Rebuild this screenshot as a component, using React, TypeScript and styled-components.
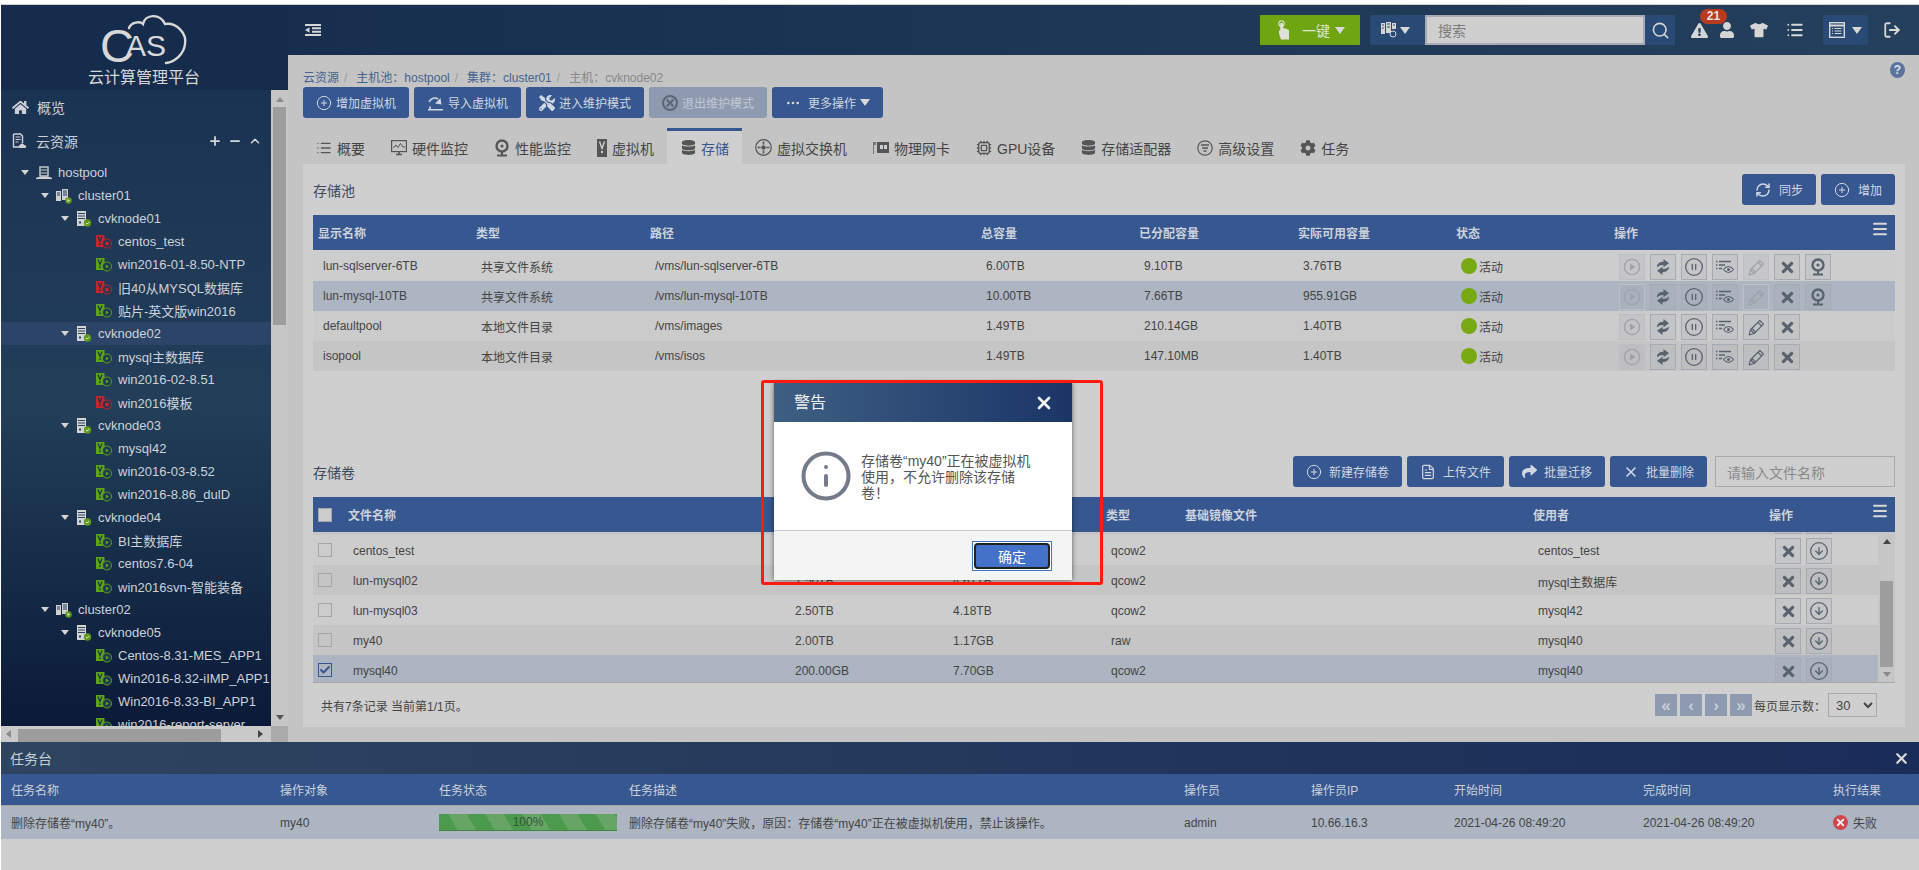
import React from 'react';
import styled, { createGlobalStyle } from 'styled-components';
import { CirclePlus, CirclePause, CircleArrowDown, RefreshCw, X as XIcon, FileText, Ellipsis, List, Cpu, Menu, Search, LogOut, Info, Check, ChevronUp, Plus, Minus } from 'lucide-react';
import { FaHome, FaTimes, FaTools, FaTshirt, FaUser, FaDatabase, FaCog, FaShare, FaExclamationTriangle } from 'react-icons/fa';

const Font = `"Liberation Sans", "Noto Sans CJK SC", sans-serif`;

const Global = createGlobalStyle`
  html, body { margin: 0; padding: 0; background: #fff; overflow: hidden; }
  body { font-family: ${Font}; font-size: 12px; color: #444; }
  * { box-sizing: border-box; }
`;

const Page = styled.div`
  width: 1919px; height: 870px; padding-left: 1px; display: flex; flex-direction: column; position: relative; overflow: hidden;
`;
const TopStrip = styled.div`height: 5px; border-bottom: 1px solid #d0d0d0; background: #fff; flex: none;`;
const Middle = styled.div`display: flex; height: 737px; flex: none;`;

/* ---------- sidebar ---------- */
const Sidebar = styled.aside`width: 287px; flex: none; display: flex; flex-direction: column; background: #c8c8c8;`;
const LogoArea = styled.div`
  height: 85px; flex: none; background: #162c4c; display: flex; flex-direction: column; align-items: center; color: #d6d6d6;
  padding-top: 9px; padding-right: 1px;
`;
const LogoSvg = styled.svg`overflow: visible; flex: none;`;
const LogoTitle = styled.div`font-size: 16px; line-height: 18px; margin-top: 5px; color: #d8d8d8;`;
const TreeWrap = styled.div`flex: 1; display: flex; min-height: 0;`;
const TreePane = styled.div`
  width: 270px; flex: none; overflow: hidden;
  background: linear-gradient(180deg, #1b3353 0%, #223e59 50%, #0a1a38 100%);
`;
const MenuRow = styled.div`
  height: 34px; display: flex; align-items: center; padding-left: 11px; gap: 8px; color: #ccd0d6; font-size: 14px;
`;
const MenuTools = styled.div`margin-left: auto; display: flex; gap: 6px; padding-right: 9px; color: #d8d8d8;`;
const TreeList = styled.div`padding-top: 3px; white-space: nowrap;`;
const TreeRowEl = styled.div<{ $level: number; $sel?: boolean }>`
  height: 23px; display: flex; align-items: center; font-size: 13px; color: #ced2d8;
  padding-left: ${p => 20 + p.$level * 20}px;
  background: ${p => (p.$sel ? '#2b4468' : 'transparent')};
`;
const TreeCaret = styled.span<{ $hidden?: boolean }>`
  width: 0; height: 0; flex: none; margin-right: 7px;
  border-left: 4px solid transparent; border-right: 4px solid transparent;
  border-top: 5px solid ${p => (p.$hidden ? 'transparent' : '#d4d4d4')};
`;
const TreeLabel = styled.span`margin-left: 6px;`;

const VTrack = styled.div<{ $w: number }>`
  width: ${p => p.$w}px; flex: none; background: #c6c6c6; display: flex; flex-direction: column; align-items: center;
`;
const VArrow = styled.div<{ $dir: 'up' | 'down'; $c: string; $mt?: number; $mb?: number }>`
  width: 0; height: 0; flex: none; margin: ${p => p.$mt ?? 0}px 0 ${p => p.$mb ?? 0}px;
  border-left: 4px solid transparent; border-right: 4px solid transparent;
  ${p => (p.$dir === 'up' ? `border-bottom: 5px solid ${p.$c};` : `border-top: 5px solid ${p.$c};`)}
`;
const VThumb = styled.div<{ $top: number; $h: number }>`
  width: 13px; height: ${p => p.$h}px; background: #9d9d9d; margin-top: ${p => p.$top}px; flex: none;
`;
const VSpacer = styled.div`flex: 1;`;
const HTrack = styled.div`height: 16px; flex: none; display: flex; align-items: center; background: #c9c9c9;`;
const HArrow = styled.div<{ $dir: 'left' | 'right' }>`
  width: 0; height: 0; flex: none;
  border-top: 4px solid transparent; border-bottom: 4px solid transparent;
  ${p => (p.$dir === 'left' ? 'border-right: 5px solid #8a8a8a; margin: 0 7px 0 5px;' : 'border-left: 5px solid #444; margin: 0 6px 0 37px;')}
`;
const HThumb = styled.div`width: 203px; height: 13px; background: #9d9d9d; margin-top: 2px;`;
const HCorner = styled.div`margin-left: auto; width: 17px; height: 16px; background: #aaa;`;

/* ---------- header ---------- */
const MainCol = styled.div`flex: 1; min-width: 0; display: flex; flex-direction: column; background: #c4c4c4;`;
const TopBar = styled.header`
  height: 50px; flex: none; display: flex; align-items: center; color: #d6d6d6;
  background: linear-gradient(90deg, #172e4e 0%, #24405c 100%); padding: 0 18px 0 17px;
`;
const TopSpacer = styled.div`flex: 1;`;
const GreenButton = styled.div`
  width: 100px; height: 30px; background: #6ea511; display: flex; align-items: center; color: #dfe6d2; font-size: 14px; padding-left: 17px;
`;
const GreenLabel = styled.span`margin-left: 12px;`;
const Caret = styled.span<{ $c?: string; $ml?: number }>`
  display: inline-block; width: 0; height: 0; flex: none; margin-left: ${p => p.$ml ?? 5}px;
  border-left: 5.5px solid transparent; border-right: 5.5px solid transparent;
  border-top: 7px solid ${p => p.$c ?? '#d8d8d8'};
`;
const SearchGroup = styled.div`display: flex; margin-left: 10px; height: 30px;`;
const SearchKind = styled.div`width: 55px; background: #2a4a76; display: flex; align-items: center; padding-left: 11px;`;
const SearchInput = styled.div`
  width: 220px; border: 2px solid #a8aab4; background: #cfcfcf; color: #7c7c7c; font-size: 14px; padding-left: 11px; display: flex; align-items: center;
`;
const SearchBtn = styled.div`width: 30px; background: #2a4a76; display: flex; align-items: center; justify-content: center;`;
const IconSlot = styled.div<{ $ml: number }>`
  width: 18px; height: 20px; margin-left: ${p => p.$ml}px; display: flex; align-items: center; justify-content: center; position: relative; flex: none;
`;
const Badge = styled.span`
  position: absolute; left: 10px; top: -11px; width: 27px; height: 15px; border-radius: 8px; background: #b93a1f; color: #e4e4e4;
  font-size: 12px; font-weight: bold; line-height: 15px; text-align: center;
`;
const ViewBtn = styled.div`
  width: 45px; height: 30px; margin-left: 19px; border-radius: 3px; background: #2a4a76; display: flex; align-items: center; padding-left: 6px; flex: none;
`;

/* ---------- content ---------- */
const Content = styled.main`flex: 1; min-height: 0; display: flex; flex-direction: column; padding: 0 14px 15px 15px;`;
const CrumbRow = styled.div`height: 32px; flex: none; display: flex; align-items: center; justify-content: space-between; padding-top: 11px;`;
const Crumbs = styled.div`color: #46638f; font-size: 12px;`;
const CrumbSep = styled.span`color: #999; margin: 0 9px 0 5px;`;
const CrumbLast = styled.span`color: #888;`;
const HelpMark = styled.span`
  align-self: flex-start; margin-top: -4px; width: 15px; height: 16px; border-radius: 50%; background: #5a739f; color: #dfe3ea;
  font-size: 12px; font-weight: bold; line-height: 16px; text-align: center;
`;
const ActionBar = styled.div`display: flex; gap: 5px; height: 31px; flex: none;`;
const ActionBtn = styled.div<{ $off?: boolean; $gap?: number; $pl?: number }>`
  height: 31px; border-radius: 3px; display: flex; align-items: center; gap: ${p => p.$gap ?? 4}px; padding: 0 13px 0 ${p => p.$pl ?? 13}px;
  background: ${p => (p.$off ? '#8e9ab0' : '#36578f')}; color: ${p => (p.$off ? '#c2c8d2' : '#d2d8e2')}; font-size: 12px; white-space: nowrap;
`;
const TabBar = styled.div`display: flex; height: 36px; margin-top: 10px; flex: none;`;
const Tab = styled.div<{ $on?: boolean }>`
  display: flex; align-items: center; gap: 5px; padding: ${p => (p.$on ? '0' : '3px')} 13px 0; font-size: 14px;
  color: ${p => (p.$on ? '#36578f' : '#444')};
  ${p => p.$on && 'background: #cfcfcf; border-top: 3px solid #36578f; padding-left: 14px;'}
`;
const Panel = styled.section`flex: 1; min-height: 0; background: #cfcfcf; padding: 10px 10px 0; display: flex; flex-direction: column;`;
const SectionHead = styled.div`display: flex; align-items: center; height: 31px; gap: 5px; flex: none;`;
const SectionTitle = styled.div`font-size: 14px; color: #3d4a5c; margin-right: auto;`;
const FileInput = styled.div`
  width: 180px; height: 31px; margin-left: 3px; border: 1px solid #a9a9a9; color: #8a8a8a; font-size: 14px; padding-left: 11px; display: flex; align-items: center;
`;

const HeadRow = styled.div<{ $cols: string }>`
  display: grid; grid-template-columns: ${p => p.$cols}; height: 35px; background: #36578f; color: #ccd2dc; align-items: center; font-size: 12px; font-weight: bold; position: relative; flex: none;
`;
const HeadCell = styled.div`padding-left: 5px;`;
const HeadMenu = styled.div`position: absolute; right: 6px; top: 5px; color: #d8d8d8; display: flex;`;
const Row = styled.div<{ $cols: string; $tone: 'a' | 'b' | 'c' | 'sel' }>`
  display: grid; grid-template-columns: ${p => p.$cols}; height: 30px; align-items: center; flex: none;
  background: ${p => ({ a: '#cdcdcd', b: '#c5c5c5', c: '#cbcbcb', sel: '#aeb5c2' }[p.$tone])};
`;
const Cell = styled.div`padding-left: 10px; white-space: nowrap; color: #444;`;
const VolCell = styled(Cell)`padding-top: 2px;`;
const StatusDot = styled.span`display: inline-block; width: 16px; height: 16px; border-radius: 50%; background: #75aa11; vertical-align: middle; margin-right: 2px;`;
const StatusText = styled.span`vertical-align: middle;`;
const OpCell = styled.div`padding: 2px 0 0 10px; display: flex; gap: 5px;`;
const OpBtn = styled.div<{ $dim?: boolean }>`
  width: 26px; height: 26px; flex: none; display: flex; align-items: center; justify-content: center;
  background: rgba(130, 140, 155, .10);
  border: 1px solid ${p => (p.$dim ? '#bdbfc2' : '#a6abb3')};
  color: ${p => (p.$dim ? '#9ea3a9' : '#59636f')};
`;
const CheckBox = styled.div<{ $on?: boolean; $head?: boolean }>`
  width: 14px; height: 14px; margin-left: 5px; display: flex; align-items: center; justify-content: center;
  border: 1px solid ${p => (p.$on ? '#36578f' : '#a6a6a6')};
  background: ${p => (p.$head ? '#cdcdcd' : 'transparent')}; color: #36578f;
`;
const Gap85 = styled.div`height: 85px; flex: none;`;
const Gap10 = styled.div`height: 10px; flex: none;`;
const Gap1 = styled.div`height: 1px; flex: none;`;
const VolBody = styled.div`display: flex; height: 151px; flex: none; background: #c5c5c5; border-bottom: 1px solid #a6a6a6;`;
const VolScroll = styled.div`flex: 1; min-width: 0; overflow: hidden;`;
const VolInner = styled.div`margin-top: -27px;`;
const Pager = styled.div`flex: 1; display: flex; align-items: center; padding: 0 18px 0 8px; font-size: 12px; color: #444;`;
const PagerText = styled.div`margin-right: auto;`;
const PageBtn = styled.div`
  width: 22px; height: 22px; margin-right: 3px; background: #8e9ab0; color: #c8ced8; font-size: 17px; font-weight: bold; display: flex; align-items: center; justify-content: center; line-height: 1;
`;
const PageLabel = styled.div`margin: 0 2px 0 -1px;`;
const PageSelect = styled.select`
  width: 49px; height: 24px; background: transparent; border: 1px solid #a9a9a9; font-family: ${Font}; font-size: 13px; color: #444; padding-left: 3px;
`;

/* ---------- task panel ---------- */
const TaskPanel = styled.section`height: 128px; flex: none; display: flex; flex-direction: column; background: #cfcfcf;`;
const TaskTitle = styled.div`
  height: 32px; flex: none; display: flex; align-items: center; justify-content: space-between; padding: 0 9px; color: #c6cdd6; font-size: 14px;
  background: linear-gradient(90deg, #2d4560 0%, #1a2c58 100%);
`;
const TaskHead = styled.div`
  display: grid; grid-template-columns: 269px 159px 190px 555px 127px 143px 189px 190px 1fr; height: 32px; align-items: center; background: #36578f; color: #ccd2dc; font-size: 12px; border-bottom: 1px solid #a6a6a6; flex: none;
`;
const TaskRow = styled.div`
  display: grid; grid-template-columns: 269px 159px 190px 555px 127px 143px 189px 190px 1fr; height: 33px; align-items: center; background: #aeb5c2; color: #444; font-size: 12px; flex: none;
`;
const TaskCell = styled.div`padding-left: 10px; white-space: nowrap; display: flex; align-items: center;`;
const Progress = styled.div`
  width: 178px; height: 17px; text-align: center; line-height: 16px; color: #35533a; font-size: 12px; border-bottom: 1px solid #41863f;
  background: repeating-linear-gradient(60deg, #4c9a4c 0 16px, #67a567 16px 32px);
`;
const FailDot = styled.span`
  width: 15px; height: 15px; border-radius: 50%; background: #d0474b; color: #eee; display: flex; align-items: center; justify-content: center; margin-right: 5px;
`;

/* ---------- dialog ---------- */
const Highlight = styled.div`
  position: absolute; left: 761px; top: 380px; width: 342px; height: 205px; border: 3px solid #ff1a10; border-radius: 3px; pointer-events: none; z-index: 6;
`;
const Dialog = styled.div`
  position: absolute; left: 774px; top: 383px; width: 298px; height: 197px; background: #fff; box-shadow: 0 0 5px rgba(0,0,0,.55); display: flex; flex-direction: column; z-index: 5;
`;
const DialogHead = styled.div`
  height: 39px; flex: none; padding: 0 18px 3px 20px; display: flex; align-items: center; justify-content: space-between; color: #f2f2f2; font-size: 16px;
  background: linear-gradient(90deg, #3e5f83 0%, #1b3567 100%);
`;
const DialogClose = styled.span`display: flex; margin-top: 3px;`;
const DialogBody = styled.div`flex: 1; display: flex; padding: 27px 0 0 25px; border-bottom: 1px solid #c9c9d2;`;
const DialogText = styled.div`
  margin: 4px 0 0 8px; width: 178px; font-size: 14px; line-height: 16px; color: #555;
`;
const DialogFoot = styled.div`height: 49px; flex: none; background: #f4f4f4; display: flex; justify-content: flex-end; padding: 10px 20px 0 0;`;
const OkFrame = styled.div`width: 80px; height: 30px; background: #fff; border: 1px solid #4472c9; padding: 1px;`;
const OkButton = styled.div`
  width: 100%; height: 100%; background: #4472c9; color: #fff; font-size: 14px; display: flex; align-items: center; justify-content: center;
  border: 2px solid #222; border-radius: 4px;
`;

/* ---------- drawings ---------- */
const LogoMark = () => (
  <LogoSvg width="92" height="50" viewBox="0 0 92 50" fill="none">
    <text x="2" y="48" fontFamily="Liberation Sans" fill="#d8d8d8">
      <tspan fontSize="47">C</tspan>
      <tspan fontSize="30" dx="-8" dy="-6">AS</tspan>
    </text>
    <path d="M31 14 C33 8 42 7 45 10 C47 0 62 -1 67 10 C78 8 89 19 87 30 C86 40 77 48 68 49" stroke="#d8d8d8" strokeWidth="2.4" strokeLinecap="round" />
  </LogoSvg>
);
const HostpoolIcon = () => (
  <svg width="16" height="14" viewBox="0 0 16 14" fill="none">
    <rect x="4" y="1" width="8" height="9" fill="none" stroke="#d0d0d0" strokeWidth="1.4" />
    <path d="M5 4h6M5 7h6" stroke="#d0d0d0" />
    <path d="M0 12c3-2 13-2 16 0v1H0z" fill="#d0d0d0" />
  </svg>
);
const ClusterIcon = () => (
  <svg width="16" height="16" viewBox="0 0 16 16">
    <rect x="0" y="3" width="5" height="10" fill="#d0d0d0" />
    <rect x="6" y="1" width="6" height="11" fill="#d0d0d0" />
    <path d="M1 5h3M1 7h3M7 3h4M7 5h4M7 7h4" stroke="#1f3a58" />
    <circle cx="12.5" cy="12.5" r="3.2" fill="#5d9a18" />
    <path d="M11.5 11l2.5 1.5-2.5 1.5z" fill="#e8e8e8" />
  </svg>
);
const NodeIcon = () => (
  <svg width="16" height="16" viewBox="0 0 16 16">
    <rect x="1" y="0" width="9" height="15" fill="#d4d4d4" />
    <path d="M2 2.5h7M2 5h7M2 7.5h7" stroke="#2a4260" />
    <rect x="3" y="10.5" width="2" height="2" fill="#2a4260" />
    <circle cx="11.5" cy="12" r="3.7" fill="#5d9a18" />
    <path d="M9.8 12l1.2 1.2 2.2-2.2" stroke="#e8e8e8" strokeWidth="1" fill="none" />
  </svg>
);
const VmIcon = ({ bad }: { bad?: boolean }) => {
  const c = bad ? '#c9252b' : '#5da512';
  return (
    <svg width="16" height="14" viewBox="0 0 16 14" fill="none">
      <rect x="0" y="0" width="8.5" height="12" fill={c} />
      <path d="M2 1.5l2 5 2-5" stroke="#1c3050" strokeWidth="1.2" />
      <rect x="3.3" y="8.5" width="1.5" height="1.5" fill="#1c3050" />
      <circle cx="11" cy="8.5" r="4.5" stroke={c} strokeWidth="1" fill="#1e3752" />
      {bad ? <rect x="9.2" y="6.7" width="3.6" height="3.6" fill={c} /> : <path d="M9.8 6.4l3.2 2.1-3.2 2.1z" fill={c} />}
    </svg>
  );
};
const CloudDocIcon = () => (
  <svg width="16" height="16" viewBox="0 0 16 16" fill="none">
    <path d="M1.5 1h7l2 2v7M1.5 1v13h6" stroke="#d0d0d0" strokeWidth="1.4" />
    <path d="M3.5 4h5M3.5 6.5h5M3.5 9h3" stroke="#d0d0d0" />
    <path d="M8 15c-2 0-2-3 0-3 .5-2 3.6-2 4 0 2.6-.4 3 3 .8 3z" fill="#d0d0d0" />
  </svg>
);
const MenuToggle = () => (
  <svg width="16" height="12" viewBox="0 0 16 12" fill="#d6d6d6">
    <path d="M0 0h16v2H0zM7 3.3h9v2H7zM7 6.7h9v2H7zM0 10h16v2H0zM4.5 3.2v5.6L0 6z" />
  </svg>
);
const HandIcon = () => (
  <svg width="13" height="20" viewBox="0 0 13 20" fill="none">
    <circle cx="4.5" cy="3.5" r="2.8" stroke="#dfe2d8" strokeWidth="1.1" />
    <path d="M3.2 4v6.500H2v3L4 19.500h8V11c0-1.500-1-1.500-1.500-1.500S9.500 8.800 8.800 8.800 7.800 8.300 6 8.300V4c0-1.600-2.800-1.600-2.800 0z" fill="#dfe2d8" />
  </svg>
);
const SmallServers = () => (
  <svg width="17" height="17" viewBox="0 0 17 17" fill="#d6d6d6">
    <path d="M0 1h4v11H0zM5 0h5v11H5zM11 1h4v6h-4z" />
    <path d="M1 3h2M1 6h2M6 2h3M6 5h3M12 3h2" stroke="#2a4a76" />
    <circle cx="12" cy="12" r="3" fill="none" stroke="#d6d6d6" />
  </svg>
);
const ViewIcon = () => (
  <svg width="16" height="16" viewBox="0 0 16 16" fill="none" stroke="#d6d6d6">
    <rect x=".7" y=".7" width="14.6" height="14.6" strokeWidth="1.4" />
    <path d="M1 3.5h14" strokeWidth="2" />
    <path d="M3 6.5h1M3 9h1M3 11.5h1M5.5 6.5h7M5.5 9h7M5.5 11.5h7" />
  </svg>
);
const ImportIcon = () => (
  <svg width="17" height="16" viewBox="0 0 17 16" fill="none" stroke="#d2d8e2" strokeWidth="1.6">
    <path d="M1 14.800h15M3 11.500v3.300" />
    <path d="M2 7c2-4 6-5 9-3" />
    <path d="M8 8.500l6.500 1-1-6.500z" fill="#d2d8e2" stroke="none" />
  </svg>
);
const BanWrench = () => (
  <svg width="16" height="16" viewBox="0 0 16 16" fill="none" stroke="#5c6675" strokeWidth="2">
    <circle cx="8" cy="8" r="7" />
    <path d="M4.5 4.500l7 7M11.500 4.500l-7 7" />
  </svg>
);
const ScreenIcon = () => (
  <svg width="16" height="16" viewBox="0 0 16 16" fill="none" stroke="#555">
    <rect x=".6" y=".6" width="14.8" height="11" strokeWidth="1.2" />
    <path d="M2.5 8l2.500-3 2 2.500L9.500 3.500 12 7h2" strokeWidth="1" />
    <path d="M5 14.500h6M8 12v2.500" strokeWidth="1.500" />
  </svg>
);
const CamIcon = ({ c = '#555' }: { c?: string }) => (
  <svg width="16" height="18" viewBox="0 0 16 18" fill="none">
    <circle cx="8" cy="7" r="5.5" stroke={c} strokeWidth="2.4" />
    <circle cx="8" cy="7" r="1.6" fill={c} />
    <path d="M8 13v2.500M3 16.500h10" stroke={c} strokeWidth="2" />
  </svg>
);
const VmTabIcon = () => (
  <svg width="10" height="18" viewBox="0 0 10 18">
    <rect x="0" y="0" width="10" height="18" fill="#555" />
    <path d="M2.500 2.500l2.500 7 2.500-7" stroke="#cfcfcf" strokeWidth="1.4" fill="none" />
    <rect x="4" y="12" width="2" height="2" fill="#cfcfcf" />
  </svg>
);
const SwitchIcon = () => (
  <svg width="17" height="17" viewBox="0 0 17 17" fill="none" stroke="#555">
    <circle cx="8.5" cy="8.5" r="7.8" strokeWidth="1.2" />
    <circle cx="8.5" cy="8.5" r="1.8" fill="#555" />
    <path d="M8.500 2.500v3M8.500 11.500v3M2.500 8.500h3M11.500 8.500h3" strokeWidth="1.6" />
  </svg>
);
const NicIcon = () => (
  <svg width="16" height="14" viewBox="0 0 16 14">
    <path d="M0 1h3v3H1v9H0z" fill="#777" />
    <rect x="4" y="1" width="12" height="11" fill="#555" />
    <rect x="7" y="4" width="3" height="4" fill="#cfcfcf" />
    <rect x="11" y="4" width="3" height="4" fill="#cfcfcf" />
  </svg>
);
const SliderTab = () => (
  <svg width="16" height="16" viewBox="0 0 16 16" fill="none" stroke="#555" strokeWidth="1.2">
    <circle cx="8" cy="8" r="7.2" />
    <path d="M4 5h8M5 8h6M6.500 11h3" strokeWidth="1.5" />
  </svg>
);
const PlayOp = () => (
  <svg width="18" height="18" viewBox="0 0 18 18" fill="none" stroke="currentColor">
    <circle cx="9" cy="9" r="7.6" strokeWidth="1.4" />
    <path d="M7 5.500l5.500 3.500L7 12.500z" fill="currentColor" stroke="none" />
  </svg>
);
const SyncOp = () => (
  <svg width="18" height="18" viewBox="0 0 18 18" fill="currentColor">
    <path d="M3 9.500C2.800 5.500 6 3.800 9.500 3.800V1L15 5.300l-5.500 4V7C6.500 7 4.500 7.800 3 9.500z" />
    <path d="M15 8.500c.2 4-3 5.700-6.500 5.700V17L3 12.700l5.500-4V11c3 0 5-.8 6.500-2.500z" />
  </svg>
);
const ListEye = () => (
  <svg width="18" height="14" viewBox="0 0 18 14" fill="none" stroke="#59636f">
    <path d="M0 1.500h1.500M3 1.500h12M0 5h1.500M3 5h6M0 8.500h1.500M3 8.500h3" strokeWidth="1.5" />
    <path d="M7.500 9.500c3-4 7-4 10 0-3 4-7 4-10 0z" strokeWidth="1.1" />
    <circle cx="12.5" cy="9.5" r="1.5" fill="#59636f" stroke="none" />
  </svg>
);
const PencilOp = () => (
  <svg width="17" height="17" viewBox="0 0 17 17" fill="none" stroke="currentColor" strokeWidth="1.2" strokeLinejoin="round">
    <path d="M1.200 15.800l1.200-5L11.800 1.500l3.700 3.700-9.300 9.300z" />
    <path d="M2.400 10.800l3.800 3.700M10 3.300l3.700 3.700M4 9.500l3.500 3.500" />
  </svg>
);

/* ---------- data ---------- */
type TreeItem = { l: number; k: 'pool' | 'cluster' | 'node' | 'vm' | 'bad'; t: string; sel?: boolean };
const tree: TreeItem[] = [
  { l: 0, k: 'pool', t: 'hostpool' },
  { l: 1, k: 'cluster', t: 'cluster01' },
  { l: 2, k: 'node', t: 'cvknode01' },
  { l: 3, k: 'bad', t: 'centos_test' },
  { l: 3, k: 'vm', t: 'win2016-01-8.50-NTP' },
  { l: 3, k: 'bad', t: '旧40从MYSQL数据库' },
  { l: 3, k: 'vm', t: '贴片-英文版win2016' },
  { l: 2, k: 'node', t: 'cvknode02', sel: true },
  { l: 3, k: 'vm', t: 'mysql主数据库' },
  { l: 3, k: 'vm', t: 'win2016-02-8.51' },
  { l: 3, k: 'bad', t: 'win2016模板' },
  { l: 2, k: 'node', t: 'cvknode03' },
  { l: 3, k: 'vm', t: 'mysql42' },
  { l: 3, k: 'vm', t: 'win2016-03-8.52' },
  { l: 3, k: 'vm', t: 'win2016-8.86_dulD' },
  { l: 2, k: 'node', t: 'cvknode04' },
  { l: 3, k: 'vm', t: 'BI主数据库' },
  { l: 3, k: 'vm', t: 'centos7.6-04' },
  { l: 3, k: 'vm', t: 'win2016svn-智能装备' },
  { l: 1, k: 'cluster', t: 'cluster02' },
  { l: 2, k: 'node', t: 'cvknode05' },
  { l: 3, k: 'vm', t: 'Centos-8.31-MES_APP1' },
  { l: 3, k: 'vm', t: 'Win2016-8.32-iIMP_APP1' },
  { l: 3, k: 'vm', t: 'Win2016-8.33-BI_APP1' },
  { l: 3, k: 'vm', t: 'win2016-report-server' },
];
const treeIcon = (k: TreeItem['k']) =>
  k === 'pool' ? <HostpoolIcon /> : k === 'cluster' ? <ClusterIcon /> : k === 'node' ? <NodeIcon /> : <VmIcon bad={k === 'bad'} />;

const tabs: { t: string; i: React.ReactNode; on?: boolean }[] = [
  { t: '概要', i: <List size={16} color="#555" /> },
  { t: '硬件监控', i: <ScreenIcon /> },
  { t: '性能监控', i: <CamIcon /> },
  { t: '虚拟机', i: <VmTabIcon /> },
  { t: '存储', i: <FaDatabase size={15} color="#555" />, on: true },
  { t: '虚拟交换机', i: <SwitchIcon /> },
  { t: '物理网卡', i: <NicIcon /> },
  { t: 'GPU设备', i: <Cpu size={16} color="#555" /> },
  { t: '存储适配器', i: <FaDatabase size={15} color="#555" /> },
  { t: '高级设置', i: <SliderTab /> },
  { t: '任务', i: <FaCog size={16} color="#555" /> },
];

const poolCols = '158px 174px 331px 158px 159px 158px 158px 1fr';
const pools = [
  { n: 'lun-sqlserver-6TB', ty: '共享文件系统', p: '/vms/lun-sqlserver-6TB', a: '6.00TB', b: '9.10TB', c: '3.76TB', tone: 'a' as const, cam: true, dimPen: true },
  { n: 'lun-mysql-10TB', ty: '共享文件系统', p: '/vms/lun-mysql-10TB', a: '10.00TB', b: '7.66TB', c: '955.91GB', tone: 'sel' as const, cam: true, dimPen: true },
  { n: 'defaultpool', ty: '本地文件目录', p: '/vms/images', a: '1.49TB', b: '210.14GB', c: '1.40TB', tone: 'c' as const },
  { n: 'isopool', ty: '本地文件目录', p: '/vms/isos', a: '1.49TB', b: '147.10MB', c: '1.40TB', tone: 'b' as const },
];

const volCols = '30px 442px 158px 158px 79px 348px 237px 1fr';
const volHeadCols = '30px 442px 158px 158px 79px 348px 236px 1fr';
const vols = [
  { n: '', a: '', b: '', ty: '', u: '', tone: 'b' as const, blank: true },
  { n: 'centos_test', a: '', b: '', ty: 'qcow2', u: 'centos_test', tone: 'a' as const },
  { n: 'lun-mysql02', a: '7.50TB', b: '4.67TB', ty: 'qcow2', u: 'mysql主数据库', tone: 'b' as const },
  { n: 'lun-mysql03', a: '2.50TB', b: '4.18TB', ty: 'qcow2', u: 'mysql42', tone: 'a' as const },
  { n: 'my40', a: '2.00TB', b: '1.17GB', ty: 'raw', u: 'mysql40', tone: 'b' as const },
  { n: 'mysql40', a: '200.00GB', b: '7.70GB', ty: 'qcow2', u: 'mysql40', tone: 'sel' as const, on: true },
];

export default function App() {
  return (
    <Page>
      <Global />
      <TopStrip />
      <Middle>
        <Sidebar>
          <LogoArea>
            <LogoMark />
            <LogoTitle>云计算管理平台</LogoTitle>
          </LogoArea>
          <TreeWrap>
            <TreePane>
              <MenuRow><FaHome size={17} />概览</MenuRow>
              <MenuRow>
                <CloudDocIcon />云资源
                <MenuTools>
                  <Plus size={14} strokeWidth={3} />
                  <Minus size={14} strokeWidth={3} />
                  <ChevronUp size={14} strokeWidth={2.5} />
                </MenuTools>
              </MenuRow>
              <TreeList>
                {tree.map((n, i) => (
                  <TreeRowEl key={i} $level={n.l} $sel={n.sel}>
                    <TreeCaret $hidden={n.k === 'vm' || n.k === 'bad'} />
                    {treeIcon(n.k)}
                    <TreeLabel>{n.t}</TreeLabel>
                  </TreeRowEl>
                ))}
              </TreeList>
            </TreePane>
            <VTrack $w={17}>
              <VArrow $dir="up" $c="#8a8a8a" $mt={7} />
              <VThumb $top={5} $h={218} />
              <VSpacer />
              <VArrow $dir="down" $c="#555" $mb={6} />
            </VTrack>
          </TreeWrap>
          <HTrack>
            <HArrow $dir="left" />
            <HThumb />
            <HArrow $dir="right" />
            <HCorner />
          </HTrack>
        </Sidebar>
        <MainCol>
          <TopBar>
            <MenuToggle />
            <TopSpacer />
            <GreenButton>
              <HandIcon />
              <GreenLabel>一键</GreenLabel>
              <Caret />
            </GreenButton>
            <SearchGroup>
              <SearchKind><SmallServers /><Caret $ml={2} /></SearchKind>
              <SearchInput>搜索</SearchInput>
              <SearchBtn><Search size={19} strokeWidth={2} color="#d6d6d6" /></SearchBtn>
            </SearchGroup>
            <IconSlot $ml={15}>
              <FaExclamationTriangle size={17} />
              <Badge>21</Badge>
            </IconSlot>
            <IconSlot $ml={10}><FaUser size={16} /></IconSlot>
            <IconSlot $ml={14}><FaTshirt size={18} /></IconSlot>
            <IconSlot $ml={18}><List size={18} strokeWidth={2.4} /></IconSlot>
            <ViewBtn><ViewIcon /><Caret $ml={7} /></ViewBtn>
            <IconSlot $ml={15}><LogOut size={18} strokeWidth={2.4} /></IconSlot>
          </TopBar>
          <Content>
            <CrumbRow>
              <Crumbs>
                云资源<CrumbSep>/</CrumbSep>主机池：hostpool<CrumbSep>/</CrumbSep>集群：cluster01<CrumbSep>/</CrumbSep><CrumbLast>主机：cvknode02</CrumbLast>
              </Crumbs>
              <HelpMark>?</HelpMark>
            </CrumbRow>
            <ActionBar>
              <ActionBtn><CirclePlus size={16} strokeWidth={1.5} />增加虚拟机</ActionBtn>
              <ActionBtn><ImportIcon />导入虚拟机</ActionBtn>
              <ActionBtn><FaTools size={16} />进入维护模式</ActionBtn>
              <ActionBtn $off><BanWrench />退出维护模式</ActionBtn>
              <ActionBtn $gap={7}><Ellipsis size={16} />更多操作<Caret $ml={-3} /></ActionBtn>
            </ActionBar>
            <TabBar>
              {tabs.map(t => (
                <Tab key={t.t} $on={t.on}>{t.i}{t.t}</Tab>
              ))}
            </TabBar>
            <Panel>
              <SectionHead>
                <SectionTitle>存储池</SectionTitle>
                <ActionBtn $gap={8}><RefreshCw size={16} strokeWidth={2.2} />同步</ActionBtn>
                <ActionBtn $gap={8}><CirclePlus size={16} strokeWidth={1.5} />增加</ActionBtn>
              </SectionHead>
              <Gap10 />
              <HeadRow $cols={poolCols}>
                {['显示名称', '类型', '路径', '总容量', '已分配容量', '实际可用容量', '状态', '操作'].map(h => <HeadCell key={h}>{h}</HeadCell>)}
                <HeadMenu><Menu size={18} strokeWidth={2.5} /></HeadMenu>
              </HeadRow>
              <Gap1 />
              {pools.map(p => (
                <Row key={p.n} $cols={poolCols} $tone={p.tone}>
                  <Cell>{p.n}</Cell>
                  <Cell>{p.ty}</Cell>
                  <Cell>{p.p}</Cell>
                  <Cell>{p.a}</Cell>
                  <Cell>{p.b}</Cell>
                  <Cell>{p.c}</Cell>
                  <Cell><StatusDot /><StatusText>活动</StatusText></Cell>
                  <OpCell>
                    <OpBtn $dim><PlayOp /></OpBtn>
                    <OpBtn><SyncOp /></OpBtn>
                    <OpBtn><CirclePause size={20} strokeWidth={1.6} /></OpBtn>
                    <OpBtn><ListEye /></OpBtn>
                    <OpBtn $dim={p.dimPen}><PencilOp /></OpBtn>
                    <OpBtn><FaTimes size={17} /></OpBtn>
                    {p.cam && <OpBtn><CamIcon c="#59636f" /></OpBtn>}
                  </OpCell>
                </Row>
              ))}
              <Gap85 />
              <SectionHead>
                <SectionTitle>存储卷</SectionTitle>
                <ActionBtn $gap={7}><CirclePlus size={16} strokeWidth={1.5} />新建存储卷</ActionBtn>
                <ActionBtn $gap={7}><FileText size={16} strokeWidth={1.8} />上传文件</ActionBtn>
                <ActionBtn $gap={7}><FaShare size={15} />批量迁移</ActionBtn>
                <ActionBtn $gap={7}><XIcon size={16} strokeWidth={2.4} />批量删除</ActionBtn>
                <FileInput>请输入文件名称</FileInput>
              </SectionHead>
              <Gap10 />
              <HeadRow $cols={volHeadCols}>
                <CheckBox $head />
                <HeadCell>文件名称</HeadCell>
                <HeadCell />
                <HeadCell />
                <HeadCell>类型</HeadCell>
                <HeadCell>基础镜像文件</HeadCell>
                <HeadCell>使用者</HeadCell>
                <HeadCell>操作</HeadCell>
                <HeadMenu><Menu size={18} strokeWidth={2.5} /></HeadMenu>
              </HeadRow>
              <VolBody>
                <VolScroll>
                  <VolInner>
                    {vols.map((v, i) => (
                      <Row key={i} $cols={volCols} $tone={v.tone}>
                        {v.blank ? <span /> : <CheckBox $on={v.on}>{v.on && <Check size={12} strokeWidth={4} />}</CheckBox>}
                        <VolCell>{v.n}</VolCell>
                        <VolCell>{v.a}</VolCell>
                        <VolCell>{v.b}</VolCell>
                        <VolCell>{v.ty}</VolCell>
                        <VolCell />
                        <VolCell>{v.u}</VolCell>
                        <OpCell>
                          <OpBtn><FaTimes size={17} /></OpBtn>
                          <OpBtn><CircleArrowDown size={20} strokeWidth={1.6} /></OpBtn>
                        </OpCell>
                      </Row>
                    ))}
                  </VolInner>
                </VolScroll>
                <VTrack $w={17}>
                  <VArrow $dir="up" $c="#444" $mt={7} />
                  <VThumb $top={37} $h={86} />
                  <VSpacer />
                  <VArrow $dir="down" $c="#8a8a8a" $mb={5} />
                </VTrack>
              </VolBody>
              <Pager>
                <PagerText>共有7条记录 当前第1/1页。</PagerText>
                <PageBtn>«</PageBtn>
                <PageBtn>‹</PageBtn>
                <PageBtn>›</PageBtn>
                <PageBtn>»</PageBtn>
                <PageLabel>每页显示数：</PageLabel>
                <PageSelect defaultValue="30"><option value="30">30</option></PageSelect>
              </Pager>
            </Panel>
          </Content>
        </MainCol>
      </Middle>
      <TaskPanel>
        <TaskTitle>任务台<XIcon size={17} strokeWidth={3} color="#dcdcdc" /></TaskTitle>
        <TaskHead>
          {['任务名称', '操作对象', '任务状态', '任务描述', '操作员', '操作员IP', '开始时间', '完成时间', '执行结果'].map(h => <TaskCell key={h}>{h}</TaskCell>)}
        </TaskHead>
        <TaskRow>
          <TaskCell>删除存储卷“my40”。</TaskCell>
          <TaskCell>my40</TaskCell>
          <TaskCell><Progress>100%</Progress></TaskCell>
          <TaskCell>删除存储卷“my40”失败，原因：存储卷“my40”正在被虚拟机使用，禁止该操作。</TaskCell>
          <TaskCell>admin</TaskCell>
          <TaskCell>10.66.16.3</TaskCell>
          <TaskCell>2021-04-26 08:49:20</TaskCell>
          <TaskCell>2021-04-26 08:49:20</TaskCell>
          <TaskCell><FailDot><XIcon size={11} strokeWidth={4} /></FailDot>失败</TaskCell>
        </TaskRow>
      </TaskPanel>
      <Dialog>
        <DialogHead>警告<DialogClose><XIcon size={20} strokeWidth={3.2} /></DialogClose></DialogHead>
        <DialogBody>
          <Info size={54} strokeWidth={1.8} color="#747c8a" />
          <DialogText>存储卷“my40”正在被虚拟机使用，不允许删除该存储卷！</DialogText>
        </DialogBody>
        <DialogFoot><OkFrame><OkButton>确定</OkButton></OkFrame></DialogFoot>
      </Dialog>
      <Highlight />
    </Page>
  );
}
